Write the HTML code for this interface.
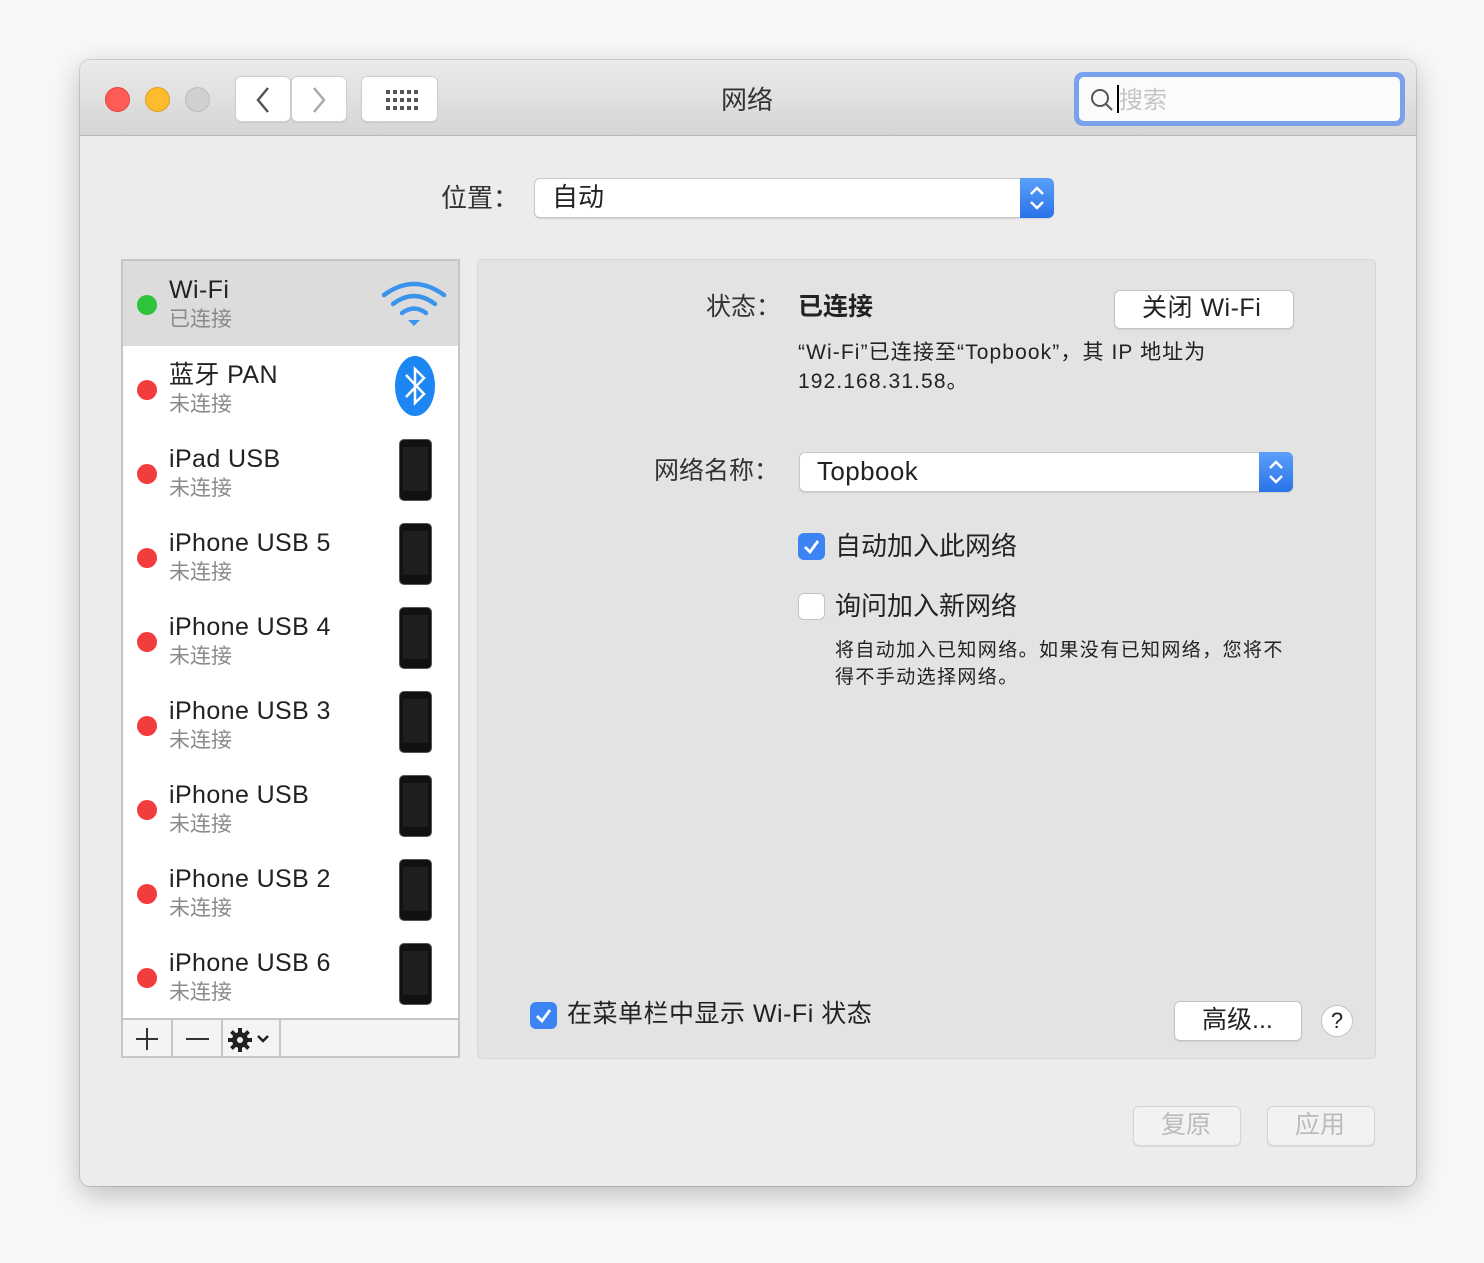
<!DOCTYPE html>
<html><head><meta charset="utf-8"><style>
*{box-sizing:border-box;margin:0;padding:0}
body{width:1484px;height:1263px;background:#f6f8fa;font-family:"Liberation Sans","Noto Sans CJK SC",sans-serif;position:relative;overflow:hidden;color:#222}
.win{position:absolute;left:80px;top:60px;width:1336px;height:1126px;background:#ececec;border-radius:10px;box-shadow:0 8px 30px rgba(0,0,0,.25),0 0 0 1px rgba(0,0,0,.12);overflow:hidden}
.tb{position:absolute;left:0;top:0;width:100%;height:76px;background:linear-gradient(#ebebeb,#d5d5d5);border-bottom:1px solid #b9b9b9}
.dot{position:absolute;top:27px;width:25px;height:25px;border-radius:50%}
.btn{position:absolute;background:#fff;border:1px solid #cfcfcf;border-radius:6px;box-shadow:0 1px 1px rgba(0,0,0,.08)}
.a{position:absolute;white-space:nowrap;line-height:1.4}
.list{position:absolute;left:41px;top:199px;width:339px;height:799px;background:#fff;border:2px solid #c6c6c6}
.row{position:absolute;left:0;width:335px;height:84px}
.row .d{position:absolute;left:14px;top:34px;width:20px;height:20px;border-radius:50%;background:#f33d3d}
.row .n{position:absolute;left:46px;top:14px;font-size:25px;line-height:30px;color:#222;letter-spacing:.4px}
.row .s{position:absolute;left:46px;top:46px;font-size:21px;line-height:26px;color:#8a8a8a}
.ph{position:absolute;left:276px;top:9px;width:33px;height:62px;background:#111;border-radius:5px;border:1px solid #555}
.ph:after{content:"";position:absolute;left:3px;top:7px;width:25px;height:44px;background:#1e1e1e}
.panel{position:absolute;left:397px;top:199px;width:899px;height:800px;background:#e3e3e3;border:1px solid #d6d6d6;border-radius:5px}
.cb{position:absolute;width:27px;height:27px;border-radius:6px;background:#3c84f4}
.cb svg{position:absolute;left:4px;top:4px}
.pop{position:absolute;background:#fff;border:1px solid #c8c8c8;border-radius:6px;box-shadow:0 1px 1px rgba(0,0,0,.1)}
.ar{position:absolute;right:-1px;top:-1px;width:34px;height:40px;background:linear-gradient(#5aa0fa,#2a73e8);border-radius:0 6px 6px 0}
</style></head><body>
<div class="win">
 <div class="tb">
  <div class="dot" style="left:25px;background:#fd5b55;border:1px solid #e0443e"></div>
  <div class="dot" style="left:65px;background:#fdbb2d;border:1px solid #dea123"></div>
  <div class="dot" style="left:105px;background:#d0d0d0;border:1px solid #bdbdbd"></div>
  <div class="btn" style="left:155px;top:16px;width:56px;height:46px"><svg width="56" height="46"><path d="M32 11 L22 23 L32 35" stroke="#555" stroke-width="2.5" fill="none"/></svg></div>
  <div class="btn" style="left:211px;top:16px;width:56px;height:46px"><svg width="56" height="46"><path d="M22 11 L32 23 L22 35" stroke="#aaa" stroke-width="2.5" fill="none"/></svg></div>
  <div class="btn" style="left:281px;top:16px;width:77px;height:46px"><svg width="77" height="46"><g fill="#555"><rect x="24" y="13" width="4" height="4"/><rect x="31" y="13" width="4" height="4"/><rect x="38" y="13" width="4" height="4"/><rect x="45" y="13" width="4" height="4"/><rect x="52" y="13" width="4" height="4"/><rect x="24" y="21" width="4" height="4"/><rect x="31" y="21" width="4" height="4"/><rect x="38" y="21" width="4" height="4"/><rect x="45" y="21" width="4" height="4"/><rect x="52" y="21" width="4" height="4"/><rect x="24" y="29" width="4" height="4"/><rect x="31" y="29" width="4" height="4"/><rect x="38" y="29" width="4" height="4"/><rect x="45" y="29" width="4" height="4"/><rect x="52" y="29" width="4" height="4"/></g></svg></div>
  <div class="a" style="left:641px;top:22px;font-size:26px;color:#333">网络</div>
  <div style="position:absolute;left:994px;top:12px;width:331px;height:54px;border-radius:9px;background:#7aa2ec;padding:5px">
   <div style="width:100%;height:100%;background:#fbfbfb;border-radius:5px;position:relative">
    <svg style="position:absolute;left:10px;top:10px" width="28" height="28"><circle cx="11" cy="11" r="8" stroke="#555" stroke-width="2" fill="none"/><path d="M17 17 L23 23" stroke="#555" stroke-width="2"/></svg>
    <div style="position:absolute;left:38px;top:8px;width:2px;height:28px;background:#000"></div>
    <div class="a" style="left:40px;top:7px;font-size:24px;color:#c4c4c4">搜索</div>
   </div>
  </div>
 </div>
 <div class="a" style="left:361px;top:120px;font-size:26px;color:#333">位置：</div>
 <div class="pop" style="left:454px;top:118px;width:520px;height:40px"><div class="a" style="left:17px;top:0px;font-size:26px">自动</div><div class="ar"><svg width="34" height="40"><path d="M11 16 L17 10 L23 16 M11 24 L17 30 L23 24" stroke="#fff" stroke-width="2.5" fill="none"/></svg></div></div>

 <div class="list">
  <div class="row" style="top:0;height:85px;background:#dcdcdc"><div class="d" style="background:#2ec33b"></div><div class="n">Wi-Fi</div><div class="s">已连接</div>
   <svg style="position:absolute;left:257px;top:18px" width="68" height="50"><g stroke="#3a93ec" stroke-width="4.5" fill="none" stroke-linecap="round"><path d="M4 16 Q34 -6 64 16"/><path d="M13 25 Q34 9 55 25"/><path d="M22 34 Q34 25 46 34"/></g><path d="M28 41 L40 41 L34 47Z" fill="#3a93ec"/></svg></div>
  <div class="row" style="top:85px"><div class="d"></div><div class="n">蓝牙 PAN</div><div class="s">未连接</div>
   <svg style="position:absolute;left:270px;top:9px" width="44" height="62"><ellipse cx="22" cy="31" rx="20" ry="30" fill="#1c86f2"/><path d="M13 20 L31 39 L22 48 L22 14 L31 23 L13 42" stroke="#fff" stroke-width="2.5" fill="none"/></svg></div>
  <div class="row" style="top:169px"><div class="d"></div><div class="n">iPad USB</div><div class="s">未连接</div><div class="ph"></div></div>
  <div class="row" style="top:253px"><div class="d"></div><div class="n">iPhone USB 5</div><div class="s">未连接</div><div class="ph"></div></div>
  <div class="row" style="top:337px"><div class="d"></div><div class="n">iPhone USB 4</div><div class="s">未连接</div><div class="ph"></div></div>
  <div class="row" style="top:421px"><div class="d"></div><div class="n">iPhone USB 3</div><div class="s">未连接</div><div class="ph"></div></div>
  <div class="row" style="top:505px"><div class="d"></div><div class="n">iPhone USB</div><div class="s">未连接</div><div class="ph"></div></div>
  <div class="row" style="top:589px"><div class="d"></div><div class="n">iPhone USB 2</div><div class="s">未连接</div><div class="ph"></div></div>
  <div class="row" style="top:673px"><div class="d"></div><div class="n">iPhone USB 6</div><div class="s">未连接</div><div class="ph"></div></div>
  <div style="position:absolute;left:0;top:757px;width:335px;height:38px;background:#f4f4f4;border-top:2px solid #c6c6c6">
   <div style="position:absolute;left:48px;top:0;width:2px;height:38px;background:#c6c6c6"></div>
   <div style="position:absolute;left:98px;top:0;width:2px;height:38px;background:#c6c6c6"></div>
   <div style="position:absolute;left:156px;top:0;width:2px;height:38px;background:#c6c6c6"></div>
   <svg style="position:absolute;left:0;top:0" width="160" height="38"><path d="M24 8 V30 M13 19 H35" stroke="#333" stroke-width="2"/><path d="M63 19 H86" stroke="#333" stroke-width="2"/><g transform="translate(117,20)"><circle r="8" fill="#222"/><g stroke="#222" stroke-width="4"><path d="M0 -12 V12 M-12 0 H12 M-8.5 -8.5 L8.5 8.5 M-8.5 8.5 L8.5 -8.5"/></g><circle r="3" fill="#f4f4f4"/></g><path d="M135 16 L140 21 L145 16" stroke="#222" stroke-width="2.5" fill="none"/></svg>
  </div>
 </div>

 <div class="panel">
  <div class="a" style="left:228px;top:30px;font-size:25px;color:#333">状态：</div>
  <div class="a" style="left:320px;top:30px;font-size:25px;font-weight:bold;color:#222">已连接</div>
  <div class="btn" style="left:636px;top:30px;width:180px;height:39px;border-color:#c4c4c4"><div class="a" style="left:27px;top:0px;font-size:25px;letter-spacing:.5px">关闭 Wi-Fi</div></div>
  <div class="a" style="left:320px;top:78px;font-size:21px;line-height:29px;color:#222;letter-spacing:1.1px">“Wi-Fi”已连接至“Topbook”，其 IP 地址为<br>192.168.31.58。</div>
  <div class="a" style="left:176px;top:194px;font-size:25px;color:#333">网络名称：</div>
  <div class="pop" style="left:321px;top:192px;width:494px;height:40px"><div class="a" style="left:17px;top:0px;font-size:26px;letter-spacing:.4px">Topbook</div><div class="ar"><svg width="34" height="40"><path d="M11 16 L17 10 L23 16 M11 24 L17 30 L23 24" stroke="#fff" stroke-width="2.5" fill="none"/></svg></div></div>
  <div class="cb" style="left:320px;top:273px"><svg width="19" height="19"><path d="M3 10 L8 15 L16 4" stroke="#fff" stroke-width="2.8" fill="none"/></svg></div>
  <div class="a" style="left:357px;top:268px;font-size:26px;color:#222">自动加入此网络</div>
  <div style="position:absolute;left:320px;top:333px;width:27px;height:27px;border-radius:6px;background:#fff;border:1px solid #c4c4c4"></div>
  <div class="a" style="left:357px;top:328px;font-size:26px;color:#222">询问加入新网络</div>
  <div class="a" style="left:357px;top:377px;font-size:19px;line-height:27px;color:#222;letter-spacing:1.4px">将自动加入已知网络。如果没有已知网络，您将不<br>得不手动选择网络。</div>
  <div class="cb" style="left:52px;top:742px"><svg width="19" height="19"><path d="M3 10 L8 15 L16 4" stroke="#fff" stroke-width="2.8" fill="none"/></svg></div>
  <div class="a" style="left:89px;top:737px;font-size:25px;color:#222;letter-spacing:.5px">在菜单栏中显示 Wi-Fi 状态</div>
  <div class="btn" style="left:696px;top:741px;width:128px;height:40px;border-color:#c4c4c4"><div class="a" style="left:27px;top:1px;font-size:25px">高级...</div></div>
  <div style="position:absolute;left:843px;top:745px;width:32px;height:32px;border-radius:50%;background:#fff;border:1px solid #c4c4c4;text-align:center;font-size:22px;line-height:30px">?</div>
 </div>
 <div class="btn" style="left:1053px;top:1046px;width:108px;height:40px;background:#f2f2f2;border-color:#d4d4d4"><div class="a" style="left:27px;top:1px;font-size:25px;color:#bbb">复原</div></div>
 <div class="btn" style="left:1187px;top:1046px;width:108px;height:40px;background:#f2f2f2;border-color:#d4d4d4"><div class="a" style="left:27px;top:1px;font-size:25px;color:#bbb">应用</div></div>
</div>
</body></html>
